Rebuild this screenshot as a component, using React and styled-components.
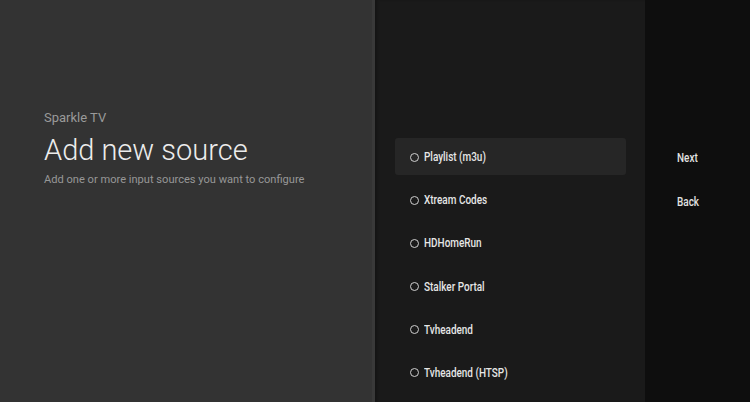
import React from "react";
import styled, { createGlobalStyle } from "styled-components";

const Global = createGlobalStyle`
  html, body { margin: 0; padding: 0; background: #0e0e0e; }
  body { font-family: Roboto, "Noto Sans", sans-serif; -webkit-font-smoothing: antialiased; }
`;

const Screen = styled.div`
  display: flex;
  width: 750px;
  height: 402px;
  overflow: hidden;
`;

const Intro = styled.section`
  width: 375px;
  flex: none;
  background: #333333;
  box-shadow: inset -3px 0 0 #393939;
  padding: 110px 0 0 44px;
  box-sizing: border-box;
  display: flex;
  flex-direction: column;
`;

const Brand = styled.div`
  font-size: 13px;
  color: #9a9a9a;
  line-height: 16px;
`;

const Title = styled.h1`
  margin: 8px 0 0;
  font-weight: 300;
  font-size: 29px;
  line-height: 32px;
  color: #ececec;
`;

const Subtitle = styled.p`
  margin: 7px 0 0;
  font-size: 11.1px;
  line-height: 14px;
  color: #979797;
`;

const Sources = styled.section`
  width: 270px;
  flex: none;
  background: #1a1a1a;
  box-shadow: inset 3px 0 3px -1px #141414;
  padding: 138px 0 0 20px;
  box-sizing: border-box;
  display: flex;
  flex-direction: column;
  gap: 6.2px;
`;

const SourceItem = styled.div`
  width: 231px;
  height: 37px;
  box-sizing: border-box;
  display: flex;
  align-items: center;
  gap: 5px;
  padding-left: 15px;
  border-radius: 3px;
  background: ${(p) => (p.$active ? "#262626" : "transparent")};
`;

const Radio = styled.span`
  width: 7px;
  height: 7px;
  border: 1.2px solid #cfcfcf;
  border-radius: 50%;
  flex: none;
  margin-top: 1px;
`;

const Label = styled.span`
  display: inline-block;
  font-size: 12px;
  font-weight: 500;
  color: #e6e6e6;
  transform: scaleX(0.83);
  transform-origin: left center;
  white-space: nowrap;
  margin-top: 1px;
`;

const Actions = styled.section`
  flex: 1;
  background: #0e0e0e;
  padding: 138px 0 0 32px;
  box-sizing: border-box;
  display: flex;
  flex-direction: column;
  gap: 6.2px;
`;

const ActionButton = styled.div`
  height: 37px;
  display: flex;
  align-items: center;
  font-size: 12px;
  font-weight: 500;
  color: #e2e2e2;
  transform: scaleX(0.83);
  transform-origin: left center;
  padding-top: 1px;
`;

const sources = [
  "Playlist (m3u)",
  "Xtream Codes",
  "HDHomeRun",
  "Stalker Portal",
  "Tvheadend",
  "Tvheadend (HTSP)",
];

export default function App() {
  return (
    <>
      <Global />
      <Screen>
        <Intro>
          <Brand>Sparkle TV</Brand>
          <Title>Add new source</Title>
          <Subtitle>Add one or more input sources you want to configure</Subtitle>
        </Intro>
        <Sources>
          {sources.map((s, i) => (
            <SourceItem key={s} $active={i === 0}>
              <Radio />
              <Label>{s}</Label>
            </SourceItem>
          ))}
        </Sources>
        <Actions>
          <ActionButton>Next</ActionButton>
          <ActionButton>Back</ActionButton>
        </Actions>
      </Screen>
    </>
  );
}
